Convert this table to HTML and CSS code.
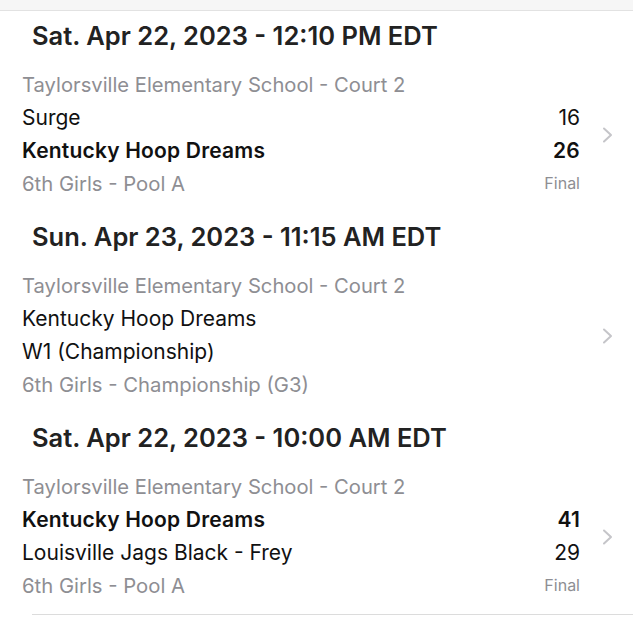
FILE: index.html
```html
<!DOCTYPE html>
<html lang="en">
<head>
    <meta charset="UTF-8">
    <meta name="viewport" content="width=device-width, initial-scale=1.0">
    <title>Schedule</title>
    <link rel="stylesheet" href="styles.css">
</head>
<body>
    <div class="top-bar"></div>
    <div class="game-list">
        <div class="game">
            <h2 class="game-date">Sat. Apr 22, 2023 - 12:10 PM EDT</h2>
            <div class="game-row">
                <div class="game-info">
                    <div class="line venue">Taylorsville Elementary School - Court 2</div>
                    <div class="line"><span>Surge</span><span>16</span></div>
                    <div class="line winner"><span>Kentucky Hoop Dreams</span><span>26</span></div>
                    <div class="line muted"><span>6th Girls - Pool A</span><span class="status">Final</span></div>
                </div>
                <div class="chevron">
                    <svg width="12" height="16" viewBox="0 0 12 16"><path d="M2 1.5 L9 8 L2 14.5" fill="none" stroke="#c5c5c9" stroke-width="2" stroke-linecap="round" stroke-linejoin="round"/></svg>
                </div>
            </div>
        </div>
        <div class="game">
            <h2 class="game-date">Sun. Apr 23, 2023 - 11:15 AM EDT</h2>
            <div class="game-row">
                <div class="game-info">
                    <div class="line venue">Taylorsville Elementary School - Court 2</div>
                    <div class="line"><span>Kentucky Hoop Dreams</span></div>
                    <div class="line"><span>W1 (Championship)</span></div>
                    <div class="line muted"><span>6th Girls - Championship (G3)</span></div>
                </div>
                <div class="chevron">
                    <svg width="12" height="16" viewBox="0 0 12 16"><path d="M2 1.5 L9 8 L2 14.5" fill="none" stroke="#c5c5c9" stroke-width="2" stroke-linecap="round" stroke-linejoin="round"/></svg>
                </div>
            </div>
        </div>
        <div class="game">
            <h2 class="game-date">Sat. Apr 22, 2023 - 10:00 AM EDT</h2>
            <div class="game-row">
                <div class="game-info">
                    <div class="line venue">Taylorsville Elementary School - Court 2</div>
                    <div class="line winner"><span>Kentucky Hoop Dreams</span><span>41</span></div>
                    <div class="line"><span>Louisville Jags Black - Frey</span><span>29</span></div>
                    <div class="line muted"><span>6th Girls - Pool A</span><span class="status">Final</span></div>
                </div>
                <div class="chevron">
                    <svg width="12" height="16" viewBox="0 0 12 16"><path d="M2 1.5 L9 8 L2 14.5" fill="none" stroke="#c5c5c9" stroke-width="2" stroke-linecap="round" stroke-linejoin="round"/></svg>
                </div>
            </div>
        </div>
    </div>
</body>
</html>
```

FILE: styles.css
```css
/* General Reset */
* {
    margin: 0;
    padding: 0;
    box-sizing: border-box;
}

body {
    font-family: 'Inter', 'Liberation Sans', sans-serif;
    background: #ffffff;
    color: #111111;
    width: 633px;
    overflow: hidden;
}

.top-bar {
    height: 11px;
    background: #f6f6f6;
    border-bottom: 1px solid #e2e2e2;
}

.game-list {
    border-bottom: 1px solid #dcdcdc;
    margin-left: 32px;
}

.game {
    margin-left: -32px;
    padding-bottom: 12px;
}

.game-date {
    padding: 10px 0 18px 32px;
    line-height: 30px;
    font-size: 25.5px;
    font-weight: 600;
    color: #222222;
}

.game-row {
    display: flex;
    align-items: center;
}

.game-info {
    flex: 1;
    padding-left: 22px;
}

.game-info .line {
    display: flex;
    justify-content: space-between;
    height: 33px;
    line-height: 33px;
    font-size: 21px;
}

.game-info .venue {
    height: 32px;
    line-height: 32px;
    font-size: 20.2px;
    color: #8e8e93;
}

.game-info .muted {
    font-size: 20.3px;
    color: #8e8e93;
}

.game-info .winner {
    font-weight: 600;
    letter-spacing: 0.2px;
}

.game-info .status {
    font-size: 16px;
    letter-spacing: 0;
}

.chevron {
    width: 53px;
    display: flex;
    justify-content: center;
    padding-left: 2px;
}
```
